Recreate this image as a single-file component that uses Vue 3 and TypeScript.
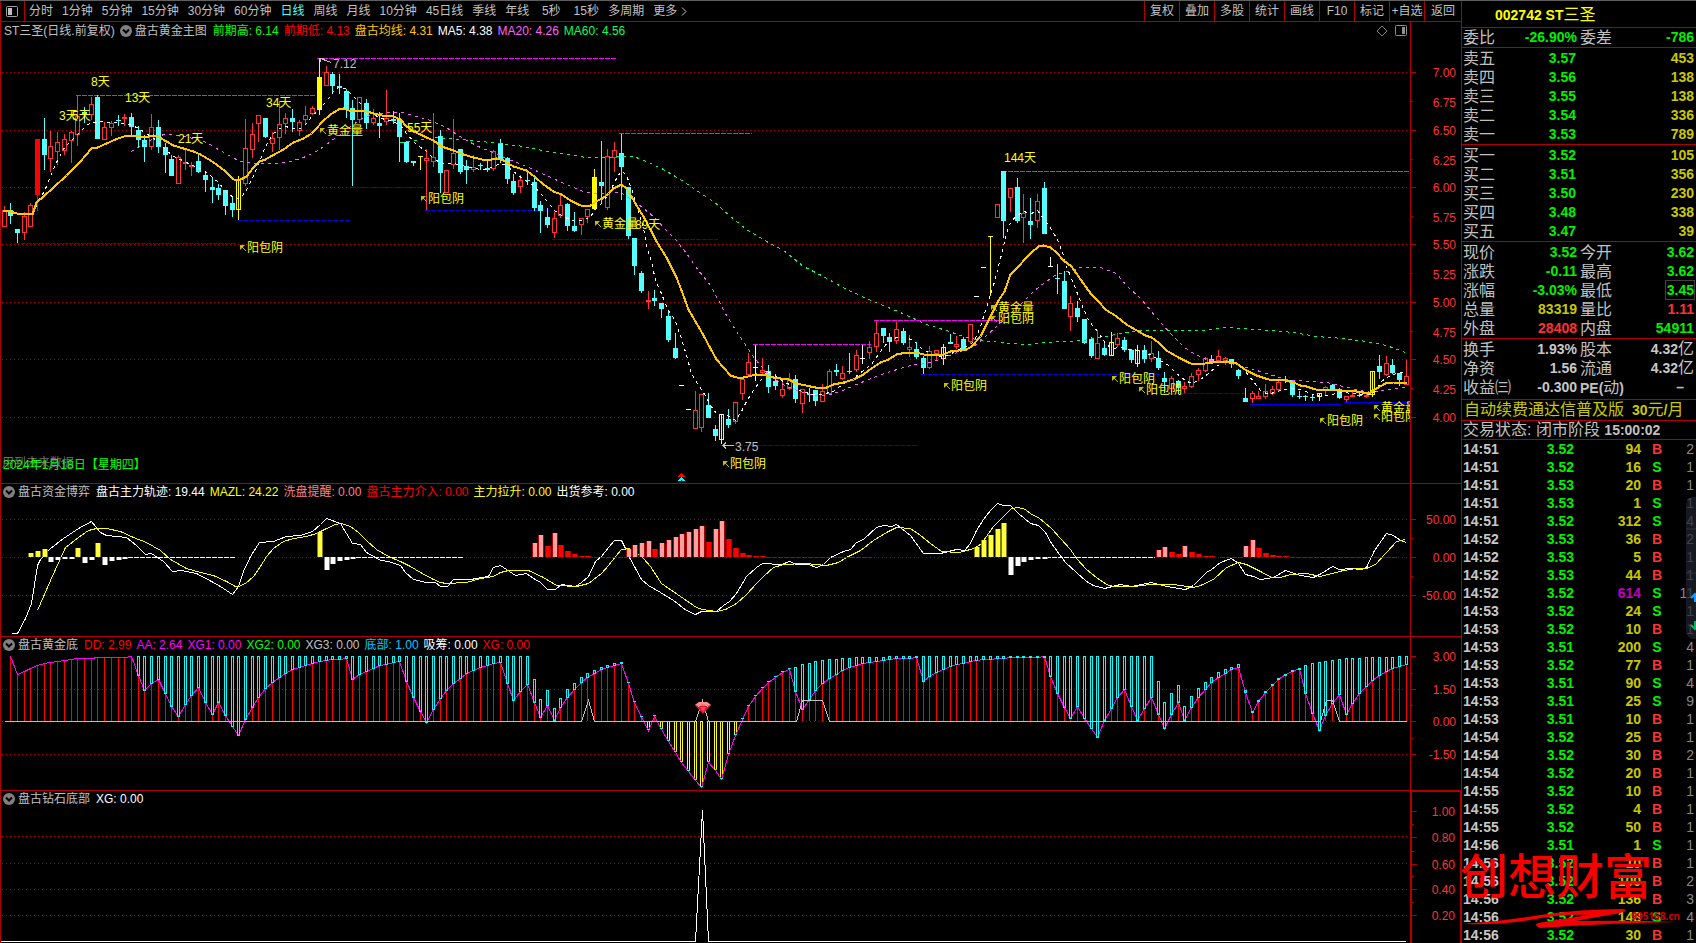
<script setup lang="ts">
interface Layer { d: string; cls: string }
interface Reading { text: string; color: string }
interface Note { text: string; x: number; y: number; cls?: string; arrow?: boolean }
interface Tick { y: number; text?: string; shift?: number }
interface Pane {
  id: string; top: number; bottom: number; title: string; symbol?: string
  readings: Reading[]; grid: number[]; ticks: Tick[]; layers: Layer[]; notes: Note[]
}
type Trace = [number, number, string]

const HEADER = 18
const PLOT_LEFT = 1
const PLOT_WIDTH = 1409
const SUB = 3 // samples are stored at three steps per drawing unit

const periods = ['分时', '1分钟', '5分钟', '15分钟', '30分钟', '60分钟', '日线', '周线', '月线', '10分钟', '45日线', '季线', '年线', '5秒', '15秒', '多周期', '更多']
const tools = ['复权', '叠加', '多股', '统计', '画线', 'F10', '标记', '+自选', '返回']

const barX = (i: number) => Math.floor(4 + 6.71 * i)
const px = (v: number) => Math.floor(v / SUB)
const box = (x: number, y: number, w: number, h: number) => `M${x} ${y}h${w}v${h}h${-w}z`

function polyline(traces: Trace[]): string {
  return traces.map(([dx, dy, s]) => s.trim().split(/\s+/).map((p) => {
    const [x, y] = p.split(',').map(Number)
    return `${px(x + dx) + 0.5} ${px(y + dy) + 0.5}`
  }).join('L')).join('L').replace(/^/, 'M')
}

/* ---- price candles: kind, high, body top, body bottom, low ---- */
const candleRuns: { from: number; base: number; rows: string }[] = [
  { from: 0, base: 0, rows: `r 618 630 682 682;c 609 632 648 672;c 687 687 699 729;r 638 649 700 722;r 609 616 682 682;R 417 417 587 635;c 354 417 467 510;r 393 438 479 516;r 397 427 456 497;r 403 418 455 466;r 393 398 425 489;r 287 350 406 440;c 321 338 347 370;r 293 313 347 362;c 287 291 419 419;r 368 381 422 422;r 363 371 386 408;c 347 360 365 378;r 342 352 358 378;c 339 353 381 407;c 378 390 422 444;c 405 421 441 486;r 342 381 442 452;c 360 381 443 460;c 430 441 467 519;c 465 477 530 530;r 466 472 553 553;r 451 486 493 510;r 488 496 502 530;c 460 483 518 521;c 515 525 542 576;c 533 561 570 609;c 552 564 587 600;c 570 570 618 645;c 588 609 632 652;y 528 541 631 660;r 357 444 553 560;r 370 402 451 476;r 346 346 374 428;c 354 354 413 416;r 397 415 434 458;r 305 373 415 450;r 339 354 374 404;c 327 354 368 396;r 362 366 394 410;r 320 346 360 374;r 318 325 342 347;Y 176 231 331 345;r 198 216 260 260;c 216 222 258 282;c 222 260 264 284;c 268 273 331 354;c 300 325 360 560;r 292 292 360 371;c 297 309 371 389;r 327 354 371 377;c 338 369 380 414;r 270 354 368 376;c 333 359 364 374;c 339 359 413 486;c 423 426 486 490;c 483 484 491 500;Y 469 469 472 510;r 447 475 485 630;r 339 472 486 501;c 391 408 521 580;r 511 511 580 580;r 357 460 497 507;c 447 447 516 524;c 480 498 512 552;r 466 502 511 516;c 490 495 500 512;c 480 506 510 518;r 450 454 509 515;c 417 430 482 490;c 471 475 537 552;c 522 543 579 585;r 525 541 563 579;c 513 541 545 556;c 534 546 624 635;c 603 615 635 699;c 625 651 675 684;r 636 655 701 716;r 587 616 650 655;c 609 612 678 695;c 636 678 693 696;r 655 655 677 705;r 628 628 653 671;Y 507 531 627 630;c 423 546 560 614;r 447 469 626 632;r 427 451 475 516;c 402 459 501 602;c 561 561 708 717;c 714 714 800 825` },
  { from: 95, base: 720, rows: `c 93 99 153 161;r 155 181 187 207;c 150 174 185 198;c 189 189 209 234;c 213 228 300 306;c 279 324 354 357;w 436 436 438 436;w 508 508 510 508;r 453 511 569 569;r 463 463 566 578;c 459 495 534 534;c 555 567 588 603;y 522 522 602 614;c 507 537 555 564;r 487 487 548 554;r 417 417 464 482;r 339 367 406 406;w 315 381 384 424;r 354 391 400 402;c 375 393 441 459;c 402 423 438 450;r 417 447 470 476;r 400 417 448 450;c 405 418 477 489;r 447 447 494 521;c 444 462 467 486;c 450 450 483 498;r 432 454 486 488;r 388 394 464 464;c 372 392 396 408;r 378 400 419 420;c 339 393 396 402;r 330 346 392 396;w 315 354 357 372;r 303 321 339 358;r 243 279 322 338;c 264 264 288 309;c 279 291 306 338;r 246 268 305 312;c 264 273 309 315;r 285 321 332 352;c 306 327 351 357;c 348 354 384 402;r 318 334 386 389;r 330 331 343 362;y 313 321 359 375;c 282 308 312 312;r 288 313 321 328;c 293 297 330 333;r 253 253 307 312;w 169 169 171 169` },
  { from: 146, base: 690, rows: `w 112 112 114 112;Y 19 19 22 198` },
  { from: 148, base: 0, rows: `r 613 613 656 656;c 514 514 663 714;r 564 564 594 636;c 534 561 663 669;r 582 640 654 729;c 594 663 675 717;r 582 604 665 684;c 546 564 702 702` },
  { from: 156, base: 690, rows: `w 81 108 111 110;c 102 144 147 192;c 124 153 237 237;r 198 219 263 303;c 213 234 261 276;c 267 267 339 342;c 321 327 378 384;r 300 340 389 389;c 336 354 375 378;y 306 337 380 380;r 310 324 345 352;c 321 330 360 366;c 357 360 390 399;y 346 360 402 413;c 345 360 387 399;r 333 370 387 396;c 363 384 414 420;c 426 444 456 489;r 438 445 479 487;c 450 453 471 492;r 456 468 477 489;r 430 438 471 474;r 414 421 437 453;r 382 385 425 426;c 375 387 396 398;r 360 379 395 397;r 381 385 393 405;c 387 388 402 414;c 417 420 438 447;c 474 504 516 516;r 484 490 508 521;r 483 498 507 508;r 462 484 503 507;r 468 478 493 495;r 450 457 481 483;c 438 450 454 459;c 450 450 495 501;c 483 498 502 507;c 495 499 502 513;c 496 501 504 513;y 489 490 502 513;r 468 472 480 495;c 462 465 477 478;c 474 477 504 507;r 498 499 510 516;r 486 495 500 501;c 489 495 500 501;r 492 495 502 504;y 423 424 497 501;c 375 408 426 447;r 378 400 437 438;c 387 405 429 433;c 429 430 450 468;r 390 438 466 467` },
]

function buildCandles(): Layer[] {
  const solid: Record<string, string> = { c: '', R: '', Y: '', w: '' }
  const line: Record<string, string> = { r: '', y: '' }
  for (const run of candleRuns) {
    run.rows.split(';').forEach((row, n) => {
      const [kind, ...nums] = row.trim().split(' ')
      const [hi, top, bottom, lo] = nums.map((v) => px(Number(v) + run.base))
      const x = barX(run.from + n)
      const height = Math.max(1, bottom - top)
      if (kind in solid) {
        solid[kind] += box(x - 2, top, 5, height)
        if (lo > hi) solid[kind] += box(x, hi, 1, lo - hi)
      } else {
        line[kind] += box(x - 1.5, top + 0.5, 4, Math.max(1, height - 1))
        line[kind] += kind === 'y' ? `M${x + 0.5} ${hi}V${lo}` : `M${x + 0.5} ${hi}V${top}M${x + 0.5} ${bottom}V${Math.max(lo, bottom)}`
      }
    })
  }
  return [
    { d: line.r, cls: 'l-candle' }, { d: line.y, cls: 'l-yellow' },
    { d: solid.c, cls: 'f-cyan' }, { d: solid.R, cls: 'f-red' }, { d: solid.Y, cls: 'f-yellow' }, { d: solid.w, cls: 'f-white' },
  ]
}

const levels = (list: number[][]) => list.map(([y, a, b]) => `M${px(a)} ${px(y) + 0.5}H${px(b)}`).join('')
const highs = levels([[286, 228, 945], [175, 951, 1851], [400, 1857, 2256], [1033, 2260, 2615], [961, 2622, 3000], [514, 3006, 4228]])
const lows = levels([[730, 45, 705], [661, 711, 1050], [562, 1054, 1270], [631, 1276, 1650], [718, 1656, 2154], [1336, 2160, 2758], [1123, 2763, 3483], [1180, 3490, 3742], [1213, 3750, 4025], [1207, 4032, 4228]])

const baseline = polyline([
  [0, 0, '10,632 30,633 50,641 97,642 110,607 130,590 160,563 200,525 240,485 275,444 292,443 320,430 345,419 380,405 412,405 432,411 460,407 478,412 500,424 520,435 550,445 580,453 600,463 630,480 650,492 675,514 700,537 720,538 738,528 760,502 778,485 795,479 818,467 850,447 880,428 910,415 935,401 950,385 965,368 990,344 1015,327 1030,326 1045,330 1080,330 1110,336 1145,345 1180,350 1200,359 1220,378 1240,393 1260,402 1280,411 1300,422 1325,440 1360,450 1390,463 1420,471'],
  [1440, 0, '20,480 50,476 70,482 100,499 140,512 165,532 190,552 220,575 245,583 270,600 300,615 328,618 345,605 368,596 385,579 400,565 424,554 440,566 455,590 470,615 490,650 515,693'],
  [1440, 720, '530,3 560,52 590,112 605,150 625,208 645,245 668,280 690,325 710,358 730,382 750,405 768,413 790,413 830,402 860,405 880,413 925,419 950,429 990,438 1020,444 1040,442 1060,434 1090,428 1120,418 1150,403 1175,385 1200,368 1225,357 1250,343 1280,336 1310,337 1330,344 1360,343 1390,342 1410,335 1438,331'],
  [2880, 690, '2,360 20,359 35,350 60,318 80,282 100,240 115,210 132,185 152,134 175,108 195,85 215,68 235,50 250,46 270,52 290,66 310,90 335,110 355,138 375,168 395,194 415,215 435,239 470,260 500,282 535,305 555,317 575,322 595,338 620,360 655,382 685,398 700,402 735,401 760,397 800,394 830,400 860,420 890,435 925,449 975,451 1000,458 1020,467 1040,470 1065,477 1105,477 1140,482 1190,485 1225,489 1250,475 1275,461 1300,456 1340,456'],
])
const ma5 = polyline([
  [0, 0, '100,640 115,597 132,575 153,520 173,480 193,441 213,421 233,403 262,374 295,365 345,366 390,374 415,386 440,400 470,420 500,450 520,470 540,478 570,492 600,505 630,525 655,548 680,576 700,592 720,596 735,575 755,540 777,485 797,440 817,402 837,385 857,380 880,385 900,386 920,370 938,347 958,328 975,307 1000,273 1015,262 1035,264 1055,283 1075,305 1100,325 1120,342 1145,355 1180,365 1200,375 1220,400 1250,432 1280,455 1300,475 1325,489 1360,491 1400,498 1440,508'],
  [1440, 0, '20,508 40,500 60,490 80,496 100,515 140,543 160,557 180,580 203,603 223,630 243,645 263,655 285,663 310,662 330,650 350,625 370,603 390,570 405,540 424,510 440,525 455,565 470,615 485,665 495,710'],
  [1440, 720, '500,15 515,65 527,120 545,160 560,200 585,245 605,295 620,345 635,400 655,435 675,465 690,497 710,520 730,523 748,530 765,540 785,515 800,485 820,450 835,430 860,395 885,405 905,422 940,440 965,453 1000,464 1025,464 1060,455 1090,430 1120,415 1150,390 1175,373 1200,335 1225,305 1250,293 1275,292 1300,300 1325,326 1350,340 1380,350 1405,345 1430,330'],
  [2880, 690, '10,352 30,342 45,325 60,290 80,232 100,165'],
  [2880, 0, '120,775 130,740 145,680 165,650 190,634 215,640 233,632 250,655 275,688 295,725 312,775'],
  [2880, 690, '320,110 340,160 360,215 385,272 415,306 435,340 455,355 480,352 510,358 540,362 575,375 600,390 625,405 650,430 675,450 695,460 720,448 745,430 770,410 800,392 830,397 855,425 880,455 900,480 925,492 950,485 990,475 1020,478 1050,490 1080,500 1110,492 1150,488 1200,493 1225,492 1245,483 1265,455 1285,440 1310,430 1330,426'],
])
const ma20 = polyline([
  [0, 0, '395,455 415,443 440,428 475,407 500,403 540,405 580,416 620,428 650,445 690,470 720,484 770,490 820,489 870,485 910,472 950,453 990,425 1020,402 1050,378 1090,353 1120,342 1160,338 1210,338 1250,350 1290,362 1340,382 1370,402 1400,420'],
  [1440, 0, '0,441 30,455 80,475 140,498 200,527 260,552 310,573 350,579 420,577 440,590 475,612 520,650 560,690'],
  [1440, 720, '590,0 620,40 655,90 690,135 715,180 740,225 770,275 800,318 825,357 855,393 885,417 920,440 960,455 1000,467 1040,465 1080,455 1130,433 1180,412 1230,395 1290,377 1340,371 1370,362 1400,350'],
  [2880, 690, '10,362 40,350 70,325 110,290 150,250 190,215 220,185 250,160 290,134 330,120 360,112 420,113 470,130 500,165 540,205 590,262 630,310 670,350 700,370 740,387 790,398 830,402 870,414 920,430 980,448 1040,454 1100,458 1150,468 1200,482 1235,488 1280,478 1340,471'],
])
const ma60 = polyline([
  [0, 0, '1200,427 1250,420 1310,413 1380,417'],
  [1440, 0, '0,425 60,429 130,440 200,454 260,462 320,471 370,472 424,468 460,470 500,485 550,508 600,537 640,565 700,605 750,650 800,687 850,718'],
  [1440, 720, '860,5 910,32 970,78 1030,110 1100,148 1180,184 1260,218 1340,252 1400,272'],
  [2880, 690, '0,317 30,326 90,334 150,339 210,343 260,337 370,330 400,324 450,316 500,306 550,301 730,300 790,291 850,294 930,301 1000,308 1070,318 1150,326 1220,334 1280,345 1335,366'],
])

/* ---- capital flow ---- */
const BASE = 1440
const track = polyline([
  [0, BASE, '35,460 52,460 75,415 95,370 112,255 122,237 150,205 190,175 235,145 275,124 300,157 320,167 380,173 410,196 437,223 455,220 490,245 517,273 545,270 590,280 635,303 660,318 680,332 698,343 715,320 730,275 750,230 777,188 820,184 860,168 900,165 938,155 960,133 980,115 1020,130 1040,160 1058,190 1080,194 1100,218 1140,240 1165,243 1200,256 1215,278 1240,298 1280,306 1305,308 1322,319 1343,319 1360,298 1410,297'],
  [1440, BASE, '25,290 40,263 60,257 80,268 105,286 140,280 160,295 180,307 203,328 225,328 243,314 285,319 305,307 325,290 345,245 365,230 385,203 403,181 424,181 437,205 448,232 465,265 485,297 505,317 540,338 580,362 620,390 647,403 665,394 708,394 730,375 748,365 770,340 800,290 828,262 848,251 905,253 928,244 950,253 985,254 1010,262 1030,254 1050,233 1090,214 1110,207 1130,188 1150,178 1190,143 1210,136 1235,138 1248,133 1290,165 1330,220 1380,219 1430,208'],
  [2880, BASE, '12,212 30,190 50,150 70,118 90,92 112,70 130,75 152,77 175,100 210,129 235,135 255,157 275,190 315,248 350,277 380,305 400,315 433,325 480,313 515,319 575,307 620,319 675,328 700,315 720,295 738,276 755,267 780,247 815,235 835,250 857,283 880,290 900,298 940,291 975,270 1020,287 1060,292 1085,280 1117,259 1138,268 1170,265 1205,268 1220,263 1243,210 1280,160 1300,165 1320,181 1338,187'],
])
const mazl = polyline([
  [0, BASE, '112,392 150,300 195,203 235,171 265,150 290,145 320,146 360,155 400,172 440,187 480,210 510,237 560,265 600,277 640,286 680,303 705,318 715,319 735,310 760,288 780,258 800,230 820,205 850,185 880,175 920,170 950,160 980,146 1005,134 1025,130 1050,138 1075,156 1100,182 1130,208 1165,228 1200,243 1230,258 1260,278 1300,297 1320,307 1340,311 1400,307'],
  [1440, BASE, '0,294 40,288 60,277 85,271 145,272 190,292 230,315 290,319 325,310 365,280 385,255 405,228 425,208 445,206 470,218 490,235 510,258 545,310 600,350 650,382 668,389 708,394 735,388 770,370 800,343 830,310 850,288 880,263 910,253 975,251 1040,257 1075,247 1100,233 1140,210 1180,182 1220,157 1250,142 1290,144 1320,165 1350,190 1385,213 1435,217'],
  [2880, BASE, '10,214 40,205 60,193 80,170 100,140 130,108 155,84 175,82 195,88 215,102 235,113 275,145 300,175 330,207 350,235 380,267 410,293 440,312 460,318 520,319 570,313 640,313 700,322 720,317 760,297 800,262 835,247 860,252 900,273 935,293 960,292 990,284 1040,280 1080,288 1150,272 1190,265 1220,265 1245,253 1280,217 1310,185 1335,178'],
])

const flowBars: Record<string, string> = {
  olive: '4:219 5:213 6:207 11:204 14:189 47:157 145:201 146:180 147:165 148:147 149:129',
  grey: '7:246 8:240 9:237 10:237 12:249 13:240 15:255 16:243 17:240 18:237 48:270 49:252 50:243 51:240 52:237 150:285 151:258 152:246 153:240 154:237 155:237',
  pink: '79:189 80:165 82:159 93:207 94:195 95:189 96:183 98:189 99:180 100:171 101:162 102:156 103:147 104:138 106:147 107:123 172:210 173:201 176:198 185:198 186:180',
  red: '81:198 83:195 84:213 85:222 86:228 87:228 97:207 105:186 108:178 109:205 110:219 111:225 112:228 113:228 174:216 175:222 177:216 178:222 179:228 180:228 187:204 188:219 189:225 190:228 191:228',
}
const ZERO = px(BASE + 233)
function barLayers(): Layer[] {
  const out: Layer[] = []
  for (const [kind, data] of Object.entries(flowBars)) {
    let outer = ''
    let inner = ''
    for (const item of data.split(' ')) {
      const [i, v] = item.split(':').map(Number)
      const y = px(BASE + v)
      const top = Math.min(y, ZERO)
      const h = Math.max(1, Math.abs(ZERO - y))
      outer += box(barX(i) - 2, top, 6, h)
      inner += box(barX(i) - 1, top, 4, h)
    }
    out.push({ d: outer, cls: `edge-${kind}` }, { d: inner, cls: `core-${kind}` })
  }
  return out
}
const zeroLine = (list: number[][]) => list.map(([a, b]) => `M${a} ${ZERO + 0.5}H${b}`).join('')

/* ---- bottom finder, one value per bar starting at the second bar ---- */
const ddValues = ('530 583 575 565 556 551 547 544 541 538 536 535 535 533 533 532 532 532 530 586 631 611 597 640 680 710 674 647 622 668 704 668 707 740 766 719 682 653 626 608 593 580 569 563 556 550 544 541 539 538 536 598 584 574 566 557 553 548 544 604 653 694 727 689 656 632 611 596 581 571 563 556 550 548 '
  + '610 661 634 613 667 712 677 721 682 652 628 607 592 580 569 562 556 550 611 667 711 750 708 747 783 817 847 874 901 921 846 871 898 823 765 718 679 650 625 607 592 577 569 634 688 658 631 610 595 583 571 562 556 550 547 544 541 538 536 535 535 533 604 589 577 568 559 554 '
  + '550 545 542 538 538 536 535 532 532 532 532 532 530 589 640 683 715 679 715 746 773 722 685 653 629 679 722 685 653 704 745 704 667 721 682 653 628 607 592 580 569 563 637 697 664 637 616 599 584 574 566 640 700 751 707 671 643 703 671 640 619 601 586 574 565 559 553').split(' ').map(Number)
const capped: Record<number, number> = {}
const cap = (from: number, list: string) => list.split(' ').forEach((v, n) => { capped[from + n] = Number(v) })
cap(79, '598 658 631 685 655 628 610 592 580 571 562 556 550 547')
cap(118, '562 553 550 544 541 538 538 535 535 532 532 532 532 532 529 529 529 529 529 529')
cap(172, '604 667 640 616 679 649 625 607 592 577 568 562 553 631 694 661 634 613 596 583 572 565 556 550 547 544 541 538 535 535 535 532 532 532 532 532 529 529')

function bottomLayers(): Layer[] {
  let red = ''
  let cyan = ''
  let yellow = ''
  let caps = ''
  const zero = px(BASE + 724)
  const points: string[] = []
  ddValues.forEach((v, n) => {
    const i = n + 1
    const x = barX(i)
    const y = px(BASE + v)
    points.push(`${x + 0.5} ${y + 0.5}`)
    if (y < zero) red += `M${x + 0.5} ${y}V${zero}`
    const thin = i >= 93 && i <= 117
    if (thin) {
      caps += box(x - 1, y - 1, 3, 1)
      if (y > zero) yellow += box(x - 0.5, zero + 0.5, 2, y - zero - 1)
    } else if (i >= 20) {
      const top = px(BASE + (capped[i] ?? 528))
      cyan += box(x - 0.5, top + 0.5, 2, Math.max(1, y - top))
    }
  })
  return [
    { d: red, cls: 'l-red' }, { d: yellow, cls: 'l-yellow' },
    { d: `M${points.join('L')}`, cls: 'l-purple' }, { d: cyan, cls: 'l-aqua' }, { d: caps, cls: 'f-aqua' },
    { d: polyline([[0, BASE, '12,724'], [1440, BASE, '305,724 325,661 343,724 647,724 667,661 685,724 950,724 967,661 1027,661 1048,724'], [2880, BASE, '1080,724 1100,661 1117,661 1138,724 1338,724']]), cls: 'l-grey' },
  ]
}

const signal = (text: string, x: number, y: number): Note => ({ text, x, y, arrow: true })

const panes: Pane[] = [
  {
    id: 'price', top: 22, bottom: 483, title: '盘古黄金主图', symbol: 'ST三圣(日线.前复权)',
    readings: [
      { text: '前期高: 6.14', color: 'green' }, { text: '前期低: 4.13', color: 'red' }, { text: '盘古均线: 4.31', color: 'gold' },
      { text: 'MA5: 4.38', color: 'white' }, { text: 'MA20: 4.26', color: 'violet' }, { text: 'MA60: 4.56', color: 'mint' },
    ],
    grid: [72, 130, 187, 244, 302, 359, 417],
    ticks: [
      { y: 72, text: '7.00' }, { y: 101, text: '6.75', shift: 1 }, { y: 130, text: '6.50' }, { y: 159, text: '6.25', shift: 1 }, { y: 187, text: '6.00' },
      { y: 216, text: '5.75', shift: 1 }, { y: 244, text: '5.50' }, { y: 273, text: '5.25', shift: 1 }, { y: 302, text: '5.00' }, { y: 331, text: '4.75', shift: 1 },
      { y: 359, text: '4.50' }, { y: 388, text: '4.25', shift: 1 }, { y: 417, text: '4.00' },
    ],
    layers: [
      { d: highs, cls: 'l-high' }, { d: lows, cls: 'l-low' }, ...buildCandles(),
      { d: ma60, cls: 'l-ma60' }, { d: ma20, cls: 'l-ma20' }, { d: ma5, cls: 'l-ma5' }, { d: baseline, cls: 'l-gold' },
      { d: 'M320.5 58.5L331 62.5M320 61.5v-3h4M723 445.5H734M726 442.5l-3 3l3 3', cls: 'l-grey' },
      { d: 'M681 473l4 4h-8z', cls: 'f-red' }, { d: 'M681 477l4 4h-3l-1-1l-1 1h-3z', cls: 'f-aqua' },
    ],
    notes: [
      { text: '3天', x: 59, y: 116 }, { text: '5天', x: 72, y: 116 }, { text: '8天', x: 91, y: 82 }, { text: '13天', x: 125, y: 98 }, { text: '21天', x: 178, y: 139 },
      { text: '34天', x: 266, y: 103 }, { text: '55天', x: 407, y: 128 }, { text: '89天', x: 635, y: 225 }, { text: '144天', x: 1004, y: 158 },
      signal('黄金量', 319, 131), signal('阳包阴', 420, 199), signal('阳包阴', 239, 248), signal('黄金量', 594, 224), signal('阳包阴', 722, 464),
      signal('阳包阴', 943, 386), signal('黄金量', 990, 308), signal('阳包阴', 990, 319), signal('阳包阴', 1111, 379), signal('阳包阴', 1138, 390),
      signal('阳包阴', 1319, 421), signal('黄金量', 1373, 408), signal('阳包阴', 1373, 417),
      { text: '7.12', x: 333, y: 64, cls: 'pale' }, { text: '3.75', x: 735, y: 447, cls: 'pale' },
      { text: '用到未来数据', x: 2, y: 463, cls: 'dim' }, { text: '2024年1月18日【星期四】', x: 3, y: 465, cls: 'green' },
    ],
  },
  {
    id: 'flow', top: 484, bottom: 636, title: '盘古资金博弈',
    readings: [
      { text: '盘古主力轨迹: 19.44', color: 'white' }, { text: 'MAZL: 24.22', color: 'yellow' }, { text: '洗盘提醒: 0.00', color: 'salmon' },
      { text: '盘古主力介入: 0.00', color: 'red' }, { text: '主力拉升: 0.00', color: 'yellow' }, { text: '出货参考: 0.00', color: 'white' },
    ],
    grid: [519, 557, 595],
    ticks: [{ y: 519, text: '50.00' }, { y: 538 }, { y: 557, text: '0.00' }, { y: 576 }, { y: 595, text: '-50.00' }],
    layers: [
      { d: track, cls: 'l-white' }, { d: mazl, cls: 'l-yellow' },
      { d: zeroLine([[128, 236], [350, 464], [1046, 1155]]), cls: 'l-zero-white' },
      { d: zeroLine([[588, 626], [766, 872], [1220, 1242], [1290, 1397]]), cls: 'l-zero-red' },
      ...barLayers(),
    ],
    notes: [],
  },
  {
    id: 'bottom', top: 637, bottom: 790, title: '盘古黄金底',
    readings: [
      { text: 'DD: 2.99', color: 'red' }, { text: 'AA: 2.64', color: 'magenta' }, { text: 'XG1: 0.00', color: 'magenta' }, { text: 'XG2: 0.00', color: 'green' },
      { text: 'XG3: 0.00', color: 'silver' }, { text: '底部: 1.00', color: 'sky' }, { text: '吸筹: 0.00', color: 'white' }, { text: 'XG: 0.00', color: 'red' },
    ],
    grid: [689, 721, 754],
    ticks: [{ y: 656, text: '3.00' }, { y: 673 }, { y: 689, text: '1.50' }, { y: 705 }, { y: 721, text: '0.00' }, { y: 738 }, { y: 754, text: '-1.50' }],
    layers: bottomLayers(),
    notes: [],
  },
  {
    id: 'diamond', top: 791, bottom: 943, title: '盘古钻石底部',
    readings: [{ text: 'XG: 0.00', color: 'white' }],
    grid: [836, 863, 889, 915],
    ticks: [{ y: 810, text: '1.00' }, { y: 823 }, { y: 836, text: '0.80' }, { y: 850 }, { y: 863, text: '0.60' }, { y: 876 }, { y: 889, text: '0.40' }, { y: 902 }, { y: 915, text: '0.20' }],
    layers: [{ d: 'M1 941.5H695.5L702.5 810L708.5 941.5H1406', cls: 'l-white' }],
    notes: [],
  },
]

const plotTop = (p: Pane) => p.top + HEADER
const viewBox = (p: Pane) => `${PLOT_LEFT} ${plotTop(p)} ${PLOT_WIDTH} ${p.bottom - plotTop(p)}`
const gridPath = (p: Pane) => p.grid.map((y) => `M2 ${y + 0.5}H1409`).join('')
const tickPath = (p: Pane) => p.ticks.map((t) => `M0 ${t.y + 0.5}h${t.text && !t.shift ? 5 : 2}`).join('')
const notePlace = (p: Pane, n: Note) => ({
  left: `${((n.x - PLOT_LEFT) / PLOT_WIDTH) * 100}%`,
  top: `${((n.y - plotTop(p)) / (p.bottom - plotTop(p))) * 100}%`,
})
const tickPlace = (p: Pane, t: Tick) => ({ top: `${((t.y + (t.shift ?? 0) - p.top) / (p.bottom - p.top)) * 100}%` })

const asks = [['卖五', '3.57', '453'], ['卖四', '3.56', '138'], ['卖三', '3.55', '138'], ['卖二', '3.54', '336'], ['卖一', '3.53', '789']]
const bids = [['买一', '3.52', '105'], ['买二', '3.51', '356'], ['买三', '3.50', '230'], ['买四', '3.48', '338'], ['买五', '3.47', '39']]
const books = [asks, bids]
interface Stat { a: string; av: string; ac: string; b: string; bv: string; bc: string; unit?: string; boxed?: boolean; latin?: boolean }
const quote: Stat[] = [
  { a: '现价', av: '3.52', ac: 'up', b: '今开', bv: '3.62', bc: 'up' },
  { a: '涨跌', av: '-0.11', ac: 'up', b: '最高', bv: '3.62', bc: 'up' },
  { a: '涨幅', av: '-3.03%', ac: 'up', b: '最低', bv: '3.45', bc: 'up', boxed: true },
  { a: '总量', av: '83319', ac: 'vol', b: '量比', bv: '1.11', bc: 'hot' },
  { a: '外盘', av: '28408', ac: 'hot', b: '内盘', bv: '54911', bc: 'up' },
]
const basics: Stat[] = [
  { a: '换手', av: '1.93%', ac: 'plain', b: '股本', bv: '4.32', bc: 'plain', unit: '亿' },
  { a: '净资', av: '1.56', ac: 'plain', b: '流通', bv: '4.32', bc: 'plain', unit: '亿' },
  { a: '收益㈢', av: '-0.300', ac: 'plain', b: 'PE(动)', bv: '–', bc: 'dash', latin: true },
]
const statGroups = [[{ a: '委比', av: '-26.90%', ac: 'up', b: '委差', bv: '-786', bc: 'up' } as Stat], quote, basics]

const deals = `14:51 3.52 94 B 2;14:51 3.52 16 S 1;14:51 3.53 20 B 1;14:51 3.53 1 S 1;14:51 3.52 312 S 4;14:52 3.53 36 B 2;14:52 3.53 5 B 1;14:52 3.53 44 B 1;14:52 3.52 614 S 11;14:53 3.52 24 S 1;14:53 3.52 10 B 1;14:53 3.51 200 S 4;14:53 3.52 77 B 1;14:53 3.51 90 S 4;14:53 3.51 25 S 9;14:53 3.51 10 B 1;14:54 3.52 25 B 1;14:54 3.52 30 B 2;14:54 3.52 20 B 1;14:55 3.52 10 B 1;14:55 3.52 4 B 1;14:55 3.52 50 B 1;14:56 3.51 1 S 1;14:56 3.52 10 B 1;14:56 3.52 100 B 2;14:56 3.52 136 B 3;14:56 3.52 148 S 4;14:56 3.52 30 B 1`
  .split(';').map((r) => r.split(' '))
</script>

<template>
  <main class="terminal">
    <section class="charts">
      <nav class="toolbar">
        <button class="layout-btn" aria-label="布局">
          <svg width="12" height="11" viewBox="0 0 12 11"><rect x=".5" y=".5" width="11" height="10" rx="1" fill="none" stroke="#a0a0a0" /><rect x="2" y="2" width="4" height="7" fill="#c0c0c0" /></svg>
        </button>
        <div class="periods">
          <button v-for="p in periods" :key="p" :class="{ on: p === '日线', wide: p === '5秒' || p === '15秒' }">{{ p }}<svg v-if="p === '更多'" width="6" height="9" viewBox="0 0 6 9"><path d="M1 .5L5 4.500L1 8.500" fill="none" stroke="currentColor" /></svg></button>
        </div>
        <div class="tools"><button v-for="t in tools" :key="t">{{ t }}</button></div>
      </nav>

      <article v-for="pane in panes" :key="pane.id" class="pane" :class="pane.id">
        <div class="body">
          <header>
            <span v-if="pane.symbol" class="symbol">{{ pane.symbol }}</span>
            <button class="menu" aria-label="指标菜单">
              <svg width="12" height="12" viewBox="0 0 12 12"><circle cx="6" cy="6" r="6" fill="#808080" /><path d="M3 4.500L6 7.500L9 4.500" fill="none" stroke="#000" stroke-width="2" /></svg>
            </button>
            <span class="name">{{ pane.title }}</span>
            <span v-for="r in pane.readings" :key="r.text" class="reading" :class="r.color">{{ r.text }}</span>
            <span v-if="pane.symbol" class="corner">
              <svg width="12" height="12" viewBox="0 0 12 12"><path d="M6 1L11 6L6 11L1 6z" fill="none" stroke="#808080" /></svg>
              <svg width="12" height="12" viewBox="0 0 12 12"><rect x=".5" y=".5" width="11" height="10" rx="1" fill="none" stroke="#909090" /><rect x="7" y="2" width="3" height="7" fill="#909090" /></svg>
            </span>
          </header>
          <div class="plot">
            <svg class="canvas" :viewBox="viewBox(pane)" preserveAspectRatio="none">
              <path :d="gridPath(pane)" class="l-grid" />
              <path v-for="(l, i) in pane.layers" :key="i" :d="l.d" :class="l.cls" />
              <g v-if="pane.id === 'bottom'" class="gem">
                <path d="M695 705l4-3h8l4 3l-8 9z" fill="#e01828" />
                <path d="M695 705l4-3h8l4 3l-3 1l-3-2h-4l-3 2z" fill="#ff9090" />
                <path d="M700 707h6l-3 5z" fill="#ff4050" />
                <path d="M698 707l2-2h6l2 2" fill="none" stroke="#ffd0d0" />
              </g>
            </svg>
            <span v-for="(n, i) in pane.notes" :key="i" class="note" :class="n.cls" :style="notePlace(pane, n)">
              <svg v-if="n.arrow" width="8" height="8" viewBox="0 0 8 8"><path d="M1 1h5L1 6z" fill="#c0c000" /><path d="M2 2L7 7" fill="none" stroke="#c0c000" /></svg>{{ n.text }}
            </span>
          </div>
        </div>
        <div class="axis">
          <svg class="canvas" :viewBox="`0 ${pane.top} 50 ${pane.bottom - pane.top}`" preserveAspectRatio="none"><path :d="tickPath(pane)" class="l-tick" /></svg>
          <template v-for="t in pane.ticks" :key="t.y"><span v-if="t.text" :style="tickPlace(pane, t)">{{ t.text }}</span></template>
        </div>
      </article>
    </section>

    <aside class="panel">
      <h1><b>002742 ST</b>三圣</h1>
      <template v-for="(group, g) in statGroups" :key="g">
        <dl class="stats" :class="'g' + g">
          <div v-for="s in group" :key="s.a">
            <dt>{{ s.a }}</dt><dd :class="s.ac">{{ s.av }}</dd>
            <dt class="second"><template v-if="s.latin"><b>PE(</b>动<b>)</b></template><template v-else>{{ s.b }}</template></dt>
            <dd :class="[s.bc, { boxed: s.boxed }]">{{ s.bv }}<i v-if="s.unit">{{ s.unit }}</i></dd>
          </div>
        </dl>
        <template v-if="g === 0">
          <table v-for="(book, k) in books" :key="k" class="book">
            <tbody><tr v-for="r in book" :key="r[0]"><th scope="row">{{ r[0] }}</th><td class="up">{{ r[1] }}</td><td class="vol">{{ r[2] }}</td></tr></tbody>
          </table>
        </template>
      </template>
      <a class="promo" href="#">自动续费通达信普及版<span><b>30</b>元<b>/</b>月</span></a>
      <p class="status">交易状态: 闭市阶段 <b>15:00:02</b></p>
      <div class="deals">
        <table>
          <tbody>
            <tr v-for="(d, i) in deals" :key="i">
              <td class="time">{{ d[0] }}</td><td class="price up">{{ d[1] }}</td>
              <td class="size" :class="d[2] === '614' ? 'big' : 'vol'">{{ d[2] }}</td>
              <td class="side" :class="d[3] === 'B' ? 'hot' : 'up'">{{ d[3] }}</td><td class="count">{{ d[4] }}</td>
            </tr>
          </tbody>
        </table>
        <div class="handle">
          <svg width="10" height="142" viewBox="0 0 10 142"><path d="M0 32H10M0 76H10" stroke="#303440" /><path d="M5 101L9 97L13 101M9 98V105" stroke="#10a0ff" stroke-width="2" fill="none" /><path d="M5 128L9 132L13 128M9 124V131" stroke="#10b060" stroke-width="2" fill="none" /></svg>
        </div>
      </div>
      <div class="brand">
        <strong>创想财富</strong>
        <svg width="220" height="22" viewBox="0 0 220 22"><path d="M0 17Q40 15 80 8Q120 2 162 2Q170 3 160 6L116 14Q170 13 218 15Q150 16 80 21Q73 18 78 16L128 8Q100 7 70 13Q40 18 0 17z" fill="#f00000" /></svg>
        <small>995168.cn</small>
      </div>
    </aside>
  </main>
</template>

<style>
body { margin: 0; background: #000; }
</style>

<style scoped>
.terminal { display: grid; grid-template-columns: minmax(0, 1fr) 235px; height: 100vh; box-sizing: border-box; border-top: 1px solid #606060; overflow: hidden; background: #000; color: #c0c0c0; font: 12px/14px "Liberation Sans", "Noto Sans CJK SC", sans-serif; }
.terminal *, .terminal *::before { box-sizing: border-box; }
button { margin: 0; padding: 0; border: 0; background: none; color: inherit; font: inherit; cursor: pointer; }
svg { display: block; }
.charts { display: grid; grid-template-rows: 21px minmax(0, 462fr) minmax(0, 153fr) minmax(0, 154fr) minmax(0, 152fr); min-width: 0; min-height: 0; border-left: 1px solid #b00000; }

.toolbar { display: flex; border-bottom: 1px solid #b00000; white-space: nowrap; }
.layout-btn { display: flex; align-items: center; justify-content: center; width: 24px; padding-right: 2px; border-right: 1px solid #b00000; }
.periods { display: flex; flex: 1; gap: 9px; padding-left: 4px; }
.periods button { display: flex; align-items: center; gap: 4px; justify-content: center; }
.periods .wide { min-width: 26px; }
.periods .on { color: #50ffff; }
.tools { display: flex; }
.tools button { width: 35px; border-left: 1px solid #b00000; }
.tools button:last-child { width: 37px; }

.pane { display: grid; grid-template-columns: minmax(0, 1fr) 51px; min-height: 0; border-bottom: 1px solid #b00000; }
.pane.diamond { border-bottom: 0; }
.body { display: flex; flex-direction: column; min-width: 0; min-height: 0; }
header { display: flex; align-items: center; gap: 5px; height: 18px; padding: 0 3px 0 2px; white-space: nowrap; }
.pane:not(.price) header { padding-bottom: 2px; }
.symbol { padding-left: 1px; }
.name { margin: 0 1px 0 -2px; }
.corner { display: flex; gap: 7px; margin-left: auto; }
.plot { position: relative; flex: 1; min-height: 0; overflow: hidden; }
.canvas { position: absolute; inset: 0; width: 100%; height: 100%; }
.canvas path { shape-rendering: crispEdges; }
.canvas .gem path { shape-rendering: auto; }
.note { position: absolute; display: flex; align-items: center; margin-top: -7px; color: #ffff00; white-space: nowrap; }
.axis { position: relative; border-left: 1px solid #b00000; color: #ff3232; }
.axis span { position: absolute; right: 5px; margin-top: -6px; }
.diamond .axis { border: 2px solid #b00000; border-width: 1px 1px 0 2px; }

.green { color: #00ff00; }
.red { color: #ff0000; }
.gold { color: #ffc800; }
.white { color: #fff; }
.violet { color: #ff60ff; }
.mint { color: #00ff60; }
.yellow { color: #ffff00; }
.salmon { color: #ff8080; }
.magenta { color: #ff00ff; }
.silver, .pale { color: #c0c0c0; }
.sky { color: #00c8ff; }
.dim { color: #707070; }

.l-grid, .l-tick, .l-high, .l-low, .l-candle, .l-yellow, .l-ma5, .l-ma20, .l-ma60, .l-gold, .l-grey, .l-white, .l-red, .l-purple, .l-aqua, .l-zero-white, .l-zero-red { fill: none; stroke-width: 1; }
.l-grid { stroke: #b00000; stroke-dasharray: 1 3; }
.l-tick { stroke: #b00000; }
.l-high { stroke: #ff00ff; stroke-dasharray: 5 1; }
.l-low { stroke: #0000ff; stroke-dasharray: 5 1; }
.l-candle { stroke: #ff3232; }
.l-yellow { stroke: #ffff00; }
.l-ma5 { stroke: #fff; stroke-dasharray: 3 4; }
.l-ma20 { stroke: #ff60ff; stroke-dasharray: 3 4; }
.l-ma60 { stroke: #00ff60; stroke-dasharray: 3 4; }
.canvas .l-gold { stroke: #ffc800; stroke-width: 2; stroke-linejoin: round; }
.l-grey { stroke: #c0c0c0; }
.l-white { stroke: #fff; }
.l-red { stroke: #ff0000; }
.l-purple { stroke: #ff00ff; }
.l-aqua { stroke: #00ffff; }
.l-zero-white { stroke: #fff; stroke-dasharray: 5 1; }
.l-zero-red { stroke: #c00000; stroke-dasharray: 5 1; }
.f-cyan { fill: #54ffff; }
.f-aqua { fill: #00ffff; }
.f-red { fill: #ff0000; }
.f-yellow { fill: #ffff00; }
.f-white { fill: #fff; }
.edge-olive { fill: #808000; }
.core-olive { fill: #ffff40; }
.edge-grey { fill: #808080; }
.core-grey { fill: #fff; }
.edge-pink { fill: #b00000; }
.core-pink { fill: #ffa0a0; }
.edge-red { fill: #c00000; }
.core-red { fill: #ff0000; }

.panel { position: relative; display: flex; flex-direction: column; min-height: 0; border-left: 1px solid #b00000; overflow: hidden; font-size: 16px; line-height: 19px; white-space: nowrap; }
.panel b { font-size: 14px; }
.panel h1 { height: 27px; margin: 0; padding: 4px 0 0 33px; border-bottom: 1px solid #b00000; color: #ffff00; font-size: 16px; font-weight: 400; }
.stats { margin: 0; padding: 1px 2px 0 1px; border-bottom: 1px solid #b00000; }
.stats.g0 { padding-top: 0; }
.stats.g2 { padding-bottom: 2px; }
.stats div { display: grid; grid-template-columns: 49px 65px 52px minmax(0, 1fr); height: 19px; }
.stats dt { overflow: visible; }
.stats .second { padding-left: 3px; }
.stats dd { justify-self: end; margin: 0; font-size: 14px; font-weight: 700; }
.stats i { font-size: 16px; font-style: normal; font-weight: 400; line-height: 16px; }
.stats .dash { padding-right: 10px; }
.stats .boxed { height: 18px; padding-left: 1px; outline: 1px solid #404040; }
.book { width: 100%; height: 97px; border-collapse: separate; border-spacing: 0; padding: 1px 2px 0 1px; border-bottom: 1px solid #b00000; table-layout: fixed; }
.book th { width: 49px; padding: 0; height: 19px; font-weight: 400; text-align: left; }
.book td { padding: 0; font-size: 14px; font-weight: 700; text-align: right; }
.book td:nth-child(2) { width: 64px; }
.up { color: #00f000; }
.vol { color: #c8c800; }
.hot { color: #ff3232; }
.plain { color: #c8c8c8; }
.promo { height: 21px; padding: 0 0 0 2px; border-bottom: 1px solid #b00000; color: #c8c800; text-decoration: none; }
.promo span { margin-left: 8px; }
.status { height: 19px; margin: 0; border-bottom: 1px solid #b00000; padding-left: 1px; line-height: 17px; }
.deals { position: relative; flex: 1; min-height: 0; overflow: hidden; }
.deals table { width: 100%; table-layout: fixed; border-spacing: 0; font-size: 14px; font-weight: 700; line-height: 18px; }
.deals td { height: 18px; padding: 0; }
.deals .time { width: 66px; padding-left: 1px; color: #c8c8c8; }
.deals .price { width: 46px; text-align: right; }
.deals .size { width: 67px; text-align: right; }
.deals .big { color: #c000c0; }
.deals .side { width: 32px; text-align: center; }
.deals .count { padding-right: 2px; color: #888; font-weight: 400; text-align: right; }
.handle { position: absolute; top: 57px; right: 0; width: 10px; height: 142px; border-radius: 8px 0 0 8px; background: rgba(32, 36, 48, 0.7); overflow: hidden; }
.brand { position: absolute; right: 16px; bottom: 14px; width: 220px; color: #f80000; pointer-events: none; }
.brand strong { display: block; font-size: 48px; font-weight: 500; line-height: 58px; }
.brand small { position: absolute; right: 0; bottom: 7px; font: 700 10px/12px "Noto Sans", sans-serif; color: #d00000; }
</style>
